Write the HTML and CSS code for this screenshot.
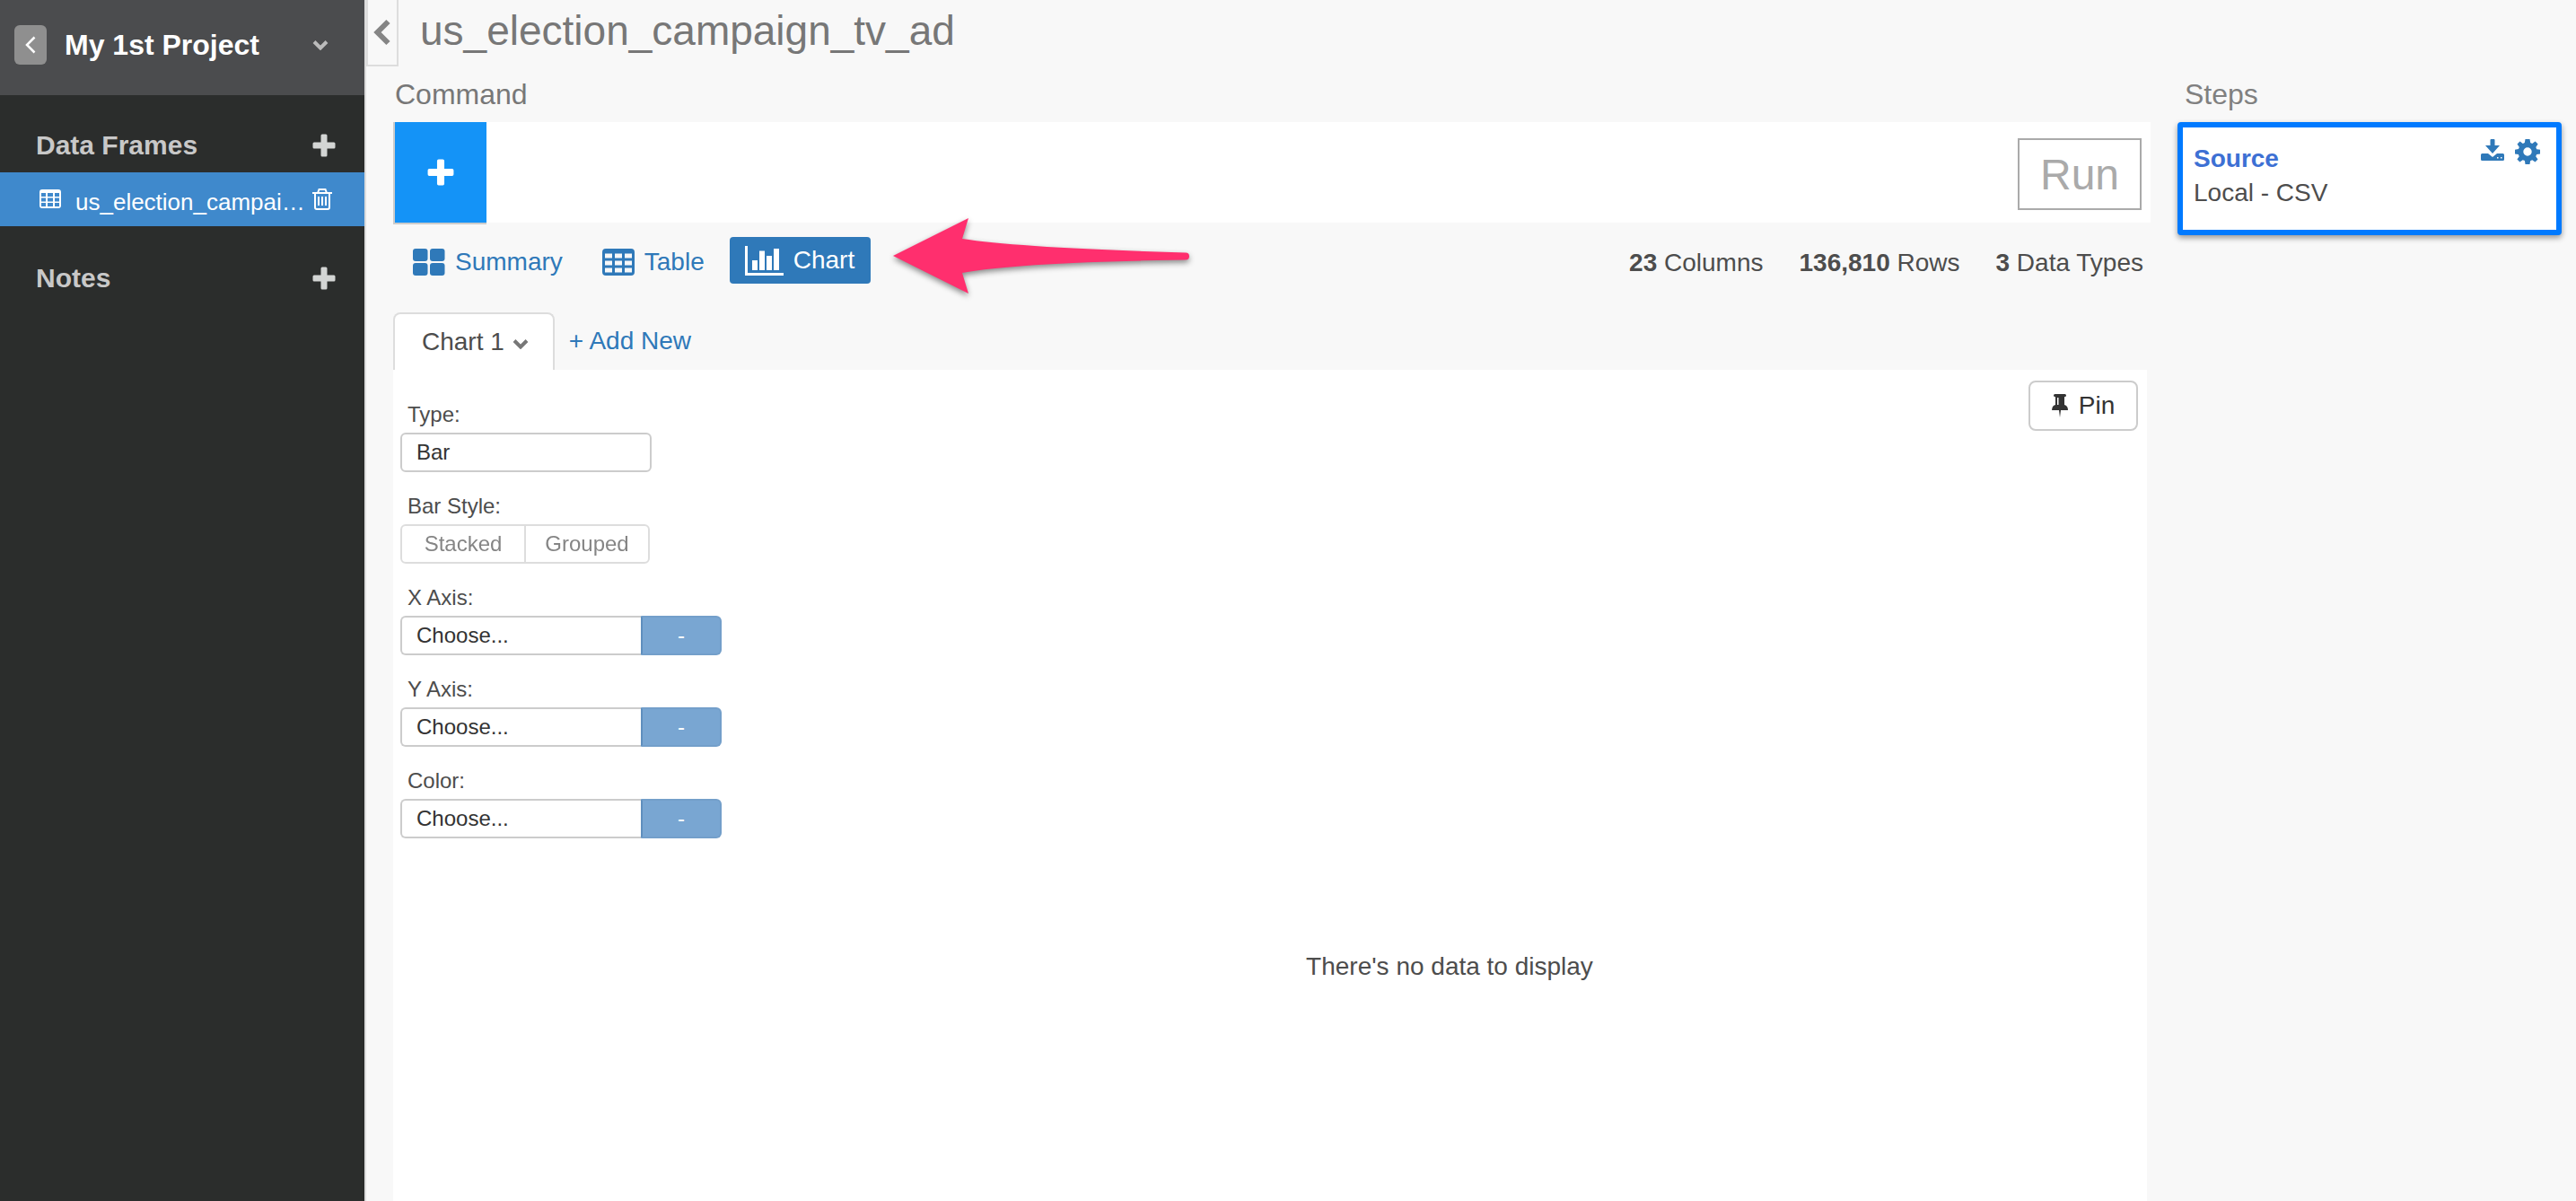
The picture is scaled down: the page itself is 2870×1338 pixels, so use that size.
FILE: index.html
```html
<!DOCTYPE html>
<html lang="en">
<head>
<meta charset="utf-8">
<title>My 1st Project</title>
<link rel="stylesheet" href="styles.css">
</head>
<body>
<svg class="defs" aria-hidden="true">
  <symbol id="plus" viewBox="0 0 26 26"><path d="M11 .5h4a1.5 1.5 0 0 1 1.500 1.500V9.500H24a1.500 1.500 0 0 1 1.500 1.500v4a1.500 1.500 0 0 1-1.500 1.500h-7.500V24a1.500 1.500 0 0 1-1.500 1.500h-4A1.500 1.500 0 0 1 9.500 24v-7.500H2A1.500 1.500 0 0 1 .5 15v-4A1.500 1.500 0 0 1 2 9.500h7.500V2A1.500 1.500 0 0 1 11 .5z"/></symbol>
  <symbol id="chevron" viewBox="0 0 18 12"><path d="M2 2.500l7 7 7-7" fill="none" stroke="currentColor" stroke-width="4"/></symbol>
  <symbol id="grid" viewBox="0 0 36 30"><path fill-rule="evenodd" d="M4 0h28a4 4 0 0 1 4 4v22a4 4 0 0 1-4 4H4a4 4 0 0 1-4-4V4a4 4 0 0 1 4-4zM3 5.500v5h8v-5zM14 5.500v5h8v-5zM25 5.500v5h8v-5zM3 13.500v5h8v-5zM14 13.500v5h8v-5zM25 13.500v5h8v-5zM3 21.500v5h8v-5zM14 21.500v5h8v-5zM25 21.500v5h8v-5z"/></symbol>
</svg>
<div class="app">
  <aside class="sidebar">
    <header class="project">
      <button class="back" aria-label="Back"><svg width="12" height="20" viewBox="0 0 12 20"><path d="M10.500 1.500L2 10l8.500 8.500" fill="none" stroke="currentColor" stroke-width="2.500"/></svg></button>
      <h1>My 1st Project</h1>
      <button class="plain project-menu" aria-label="Project menu"><svg width="18" height="12"><use href="#chevron"/></svg></button>
    </header>
    <section class="group">
      <div class="group-head"><h2>Data Frames</h2><button class="plain" aria-label="Add data frame"><svg width="26" height="26"><use href="#plus"/></svg></button></div>
      <div class="frame">
        <svg width="24" height="22" viewBox="0 0 24 22"><path fill-rule="evenodd" d="M3 0h18a3 3 0 0 1 3 3v15a3 3 0 0 1-3 3H3a3 3 0 0 1-3-3V3a3 3 0 0 1 3-3zM2 4v4h5V4zM9 4v4h6V4zM17 4v4h5V4zM2 9.500v4h5v-4zM9 9.500v4h6v-4zM17 9.500v4h5v-4zM2 15v4h5v-4zM9 15v4h6v-4zM17 15v4h5v-4z"/></svg>
        <a href="#">us_election_campai…</a>
        <button class="plain" aria-label="Delete data frame"><svg class="outline" width="22" height="24" viewBox="0 0 22 24"><path d="M0 5h22M6 5l1.500-4h7L16 5M3 5v16a2 2 0 0 0 2 2h12a2 2 0 0 0 2-2V5M7 9v10M11 9v10M15 9v10"/></svg></button>
      </div>
    </section>
    <section class="group">
      <div class="group-head"><h2>Notes</h2><button class="plain" aria-label="Add note"><svg width="26" height="26"><use href="#plus"/></svg></button></div>
    </section>
  </aside>
  <div class="page">
    <header class="titlebar">
      <button class="collapse" aria-label="Collapse sidebar"><svg width="20" height="30" viewBox="0 0 20 30"><path d="M16.500 3L4.500 15l12 12" fill="none" stroke="currentColor" stroke-width="6"/></svg></button>
      <h2>us_election_campaign_tv_ad</h2>
    </header>
    <div class="columns">
      <main class="main">
        <h3 class="label">Command</h3>
        <div class="command">
          <button class="add" aria-label="Add command"><svg width="30" height="30"><use href="#plus"/></svg></button>
          <input type="text" aria-label="Command">
          <button class="run" disabled>Run</button>
        </div>
        <div class="views">
          <nav>
            <a class="view" href="#"><svg width="36" height="30" viewBox="0 0 36 30"><rect width="16.500" height="14" rx="3"/><rect x="19" width="16.500" height="14" rx="3"/><rect y="16" width="16.500" height="14" rx="3"/><rect x="19" y="16" width="16.500" height="14" rx="3"/></svg>Summary</a>
            <a class="view" href="#"><svg width="36" height="30"><use href="#grid"/></svg>Table</a>
            <a class="view active" href="#"><svg width="43" height="33" viewBox="0 0 43 33"><path d="M0 0h3v30h40v3H0zM8 16h6v11H8zM16 5.500h6V27h-6zM24 11h6v16h-6zM32 3h6v24h-6z"/></svg>Chart</a>
            <svg class="arrow" width="336" height="96" viewBox="0 0 336 96"><path d="M3 45L87 3l-7 23q64 10 249 15.500a4 4 0 0 1 0 8Q144 52 80 64l7 23z"/></svg>
          </nav>
          <ul class="stats"><li><b>23</b> Columns</li><li><b>136,810</b> Rows</li><li><b>3</b> Data Types</li></ul>
        </div>
        <div class="tabs">
          <a class="tab" href="#">Chart 1 <svg width="18" height="12"><use href="#chevron"/></svg></a>
          <a class="new" href="#">+ Add New</a>
        </div>
        <section class="panel">
          <form class="controls">
            <div class="field"><label for="type">Type:</label><input class="box type" id="type" value="Bar"></div>
            <fieldset class="field"><legend>Bar Style:</legend><div class="pair"><button type="button" disabled>Stacked</button><button type="button" disabled>Grouped</button></div></fieldset>
            <div class="field"><label for="x">X Axis:</label><div class="choice"><input class="box" id="x" value="Choose..."><button type="button" aria-label="X Axis function" disabled>-</button></div></div>
            <div class="field"><label for="y">Y Axis:</label><div class="choice"><input class="box" id="y" value="Choose..."><button type="button" aria-label="Y Axis function" disabled>-</button></div></div>
            <div class="field"><label for="color">Color:</label><div class="choice"><input class="box" id="color" value="Choose..."><button type="button" aria-label="Color function" disabled>-</button></div></div>
          </form>
          <div class="chart">
            <button class="pin"><svg width="18" height="26" viewBox="0 0 18 26"><path fill-rule="evenodd" d="M3.500 0h11Q16 0 16 1.500T14.500 3H14v9q4 1 4 6h-8l-1 8-1-8H0q0-5 4-6V3h-.5Q2 3 2 1.500T3.500 0zM6 4v8h1.500V4z"/></svg>Pin</button>
            <p>There's no data to display</p>
          </div>
        </section>
      </main>
      <aside class="steps">
        <h3 class="label">Steps</h3>
        <article class="step">
          <div><h4>Source</h4><p>Local - CSV</p></div>
          <div class="tools">
            <button class="plain" aria-label="Download"><svg width="26" height="24" viewBox="0 0 26 24"><path fill-rule="evenodd" d="M11.500 0h3q1 0 1 1v6H21l-8 9-8-9h5.500V1q0-1 1-1zM1.500 16H8l5 4 5-4h6.500q1.500 0 1.500 1.500v5q0 1.500-1.500 1.500h-23Q0 24 0 22.500v-5Q0 16 1.500 16zM18 20v1.500h1.500V20zM22 20v1.500h1.500V20z"/></svg></button>
            <button class="plain" aria-label="Settings"><svg width="28" height="28" viewBox="0 0 28 28"><path fill-rule="evenodd" d="M11.500 0h5l.7 4 2 .9L22.600 2.500l3 3-2.300 3.400.9 2.300 3.800.6v4.600l-3.900.7-.9 2.200 2.300 3.300-3 3-3.300-2.300-2.100.9-.6 3.800h-5l-.6-3.900-2.200-.8-3.300 2.300-3-3 2.300-3.300-.9-2.200L0 16.400v-4.600l3.900-.7.9-2.200L2.500 5.500l3-3 3.300 2.400 2-.9zM14 9.300a4.700 4.700 0 1 0 0 9.400 4.700 4.700 0 0 0 0-9.400z"/></svg></button>
          </div>
        </article>
      </aside>
    </div>
  </div>
</div>
</body>
</html>
```
FILE: styles.css
```css
* { box-sizing: border-box; }
body { margin: 0; background: #f8f8f8; color: #4d4d4d; font: 28px/32px "Liberation Sans", Arial, sans-serif; }
h1, h2, h3, h4, p, ul { margin: 0; padding: 0; font-weight: normal; }
a { color: #2f79b9; text-decoration: none; }
button, input { font: inherit; margin: 0; padding: 0; }
svg { display: block; flex: none; fill: currentColor; }
.outline { fill: none; stroke: currentColor; stroke-width: 2; }
.defs { position: absolute; width: 0; height: 0; }
.plain { border: 0; background: none; color: inherit; }
.app { display: flex; min-height: 100vh; }

.sidebar { flex: none; width: 408px; background: #2b2d2c; border-right: 2px solid #ddd; color: #c8c8c8; }
.project { display: flex; align-items: center; height: 106px; padding: 0 40px 6px 16px; background: #4b4c4e; }
.project h1 { flex: 1; margin-left: 20px; color: #fff; font-size: 32px; line-height: 36px; font-weight: bold; }
.back { display: flex; align-items: center; justify-content: center; width: 36px; height: 44px; border: 0; border-radius: 6px; background: #8f8f8f; color: #fff; }
.project-menu { color: #bbb; }
.group { margin-bottom: 28px; }
.group-head { display: flex; align-items: center; justify-content: space-between; height: 60px; padding: 0 32px 0 40px; }
.group:first-of-type .group-head { height: 86px; padding-top: 26px; }
.group-head h2 { font-size: 30px; font-weight: bold; }
.group-head button { color: #d3d5d4; }
.frame { display: flex; align-items: center; height: 60px; padding: 0 36px 0 44px; background: #3f89cc; color: #fff; font-size: 26px; }
.frame a { flex: 1; margin: 6px 0 0 16px; color: #fff; white-space: nowrap; }

.page { flex: 1; min-width: 0; display: flex; flex-direction: column; }
.titlebar { display: flex; height: 74px; }
.titlebar h2 { margin-left: 24px; color: #777; font-size: 46px; line-height: 68px; }
.collapse { display: flex; align-items: center; justify-content: center; width: 36px; height: 74px; border: solid #ddd; border-width: 0 2px 2px; background: #f8f8f8; color: #858585; }
.columns { flex: 1; display: flex; gap: 30px; padding: 0 16px 0 30px; }
.main { flex: 1; min-width: 0; display: flex; flex-direction: column; }
.label { height: 62px; padding: 12px 2px 0; color: #777; font-size: 32px; line-height: 38px; }
.command { display: flex; align-items: center; height: 112px; padding-right: 10px; background: #fff; }
.add { display: flex; align-items: center; justify-content: center; align-self: flex-start; flex: none; width: 104px; height: 114px; border: solid #ccc; border-width: 0 0 2px 2px; background: #1493f7; color: #fff; }
.command input { flex: 1; min-width: 0; height: 80px; padding: 0 16px; border: 0; outline: 0; }
.run { width: 138px; height: 80px; margin-top: 4px; padding-top: 2px; border: 2px solid #aaa; background: #fff; color: #aaa; font-size: 48px; }
.views { display: flex; justify-content: space-between; align-items: flex-start; padding-top: 16px; }
.views nav { display: flex; align-items: flex-start; position: relative; padding-left: 6px; }
.view { display: flex; align-items: center; gap: 11px; height: 52px; padding: 4px 10px 0 16px; }
.view + .view { margin-left: 18px; }
.view.active { padding: 0 18px 0 17px; border-radius: 4px; background: #2f79b9; color: #fff; }
.arrow { position: absolute; left: 554px; top: -24px; fill: #ff2f6e; filter: drop-shadow(0 3px 3px rgba(0, 0, 0, .45)); }
.stats { display: flex; gap: 40px; padding: 13px 8px 0 0; list-style: none; }
.tabs { display: flex; height: 64px; margin-top: 32px; line-height: 64px; }
.tab { display: flex; align-items: center; gap: 9px; padding: 0 27px 0 30px; border: 2px solid #ddd; border-bottom: 0; border-radius: 8px 8px 0 0; background: #fff; color: #4d4d4d; }
.tab svg { color: #777; margin-top: 4px; }
.new { padding-left: 16px; }
.panel { flex: 1; display: flex; margin-right: 4px; background: #fff; }
.controls { flex: none; width: 400px; padding: 36px 34px 0 8px; font-size: 24px; }
.field { display: block; height: 102px; min-width: 0; margin: 0; padding: 0; border: 0; }
.field label, .field legend { display: block; height: 34px; padding: 0 8px; line-height: 28px; }
.box { display: block; width: 100%; min-width: 0; height: 44px; padding: 0 16px; border: 2px solid #ccc; border-radius: 6px; background: #fff; color: #333; }
.type { width: 280px; }
.pair { display: flex; width: 278px; opacity: .65; }
.pair button { flex: 1; height: 44px; border: 2px solid #ccc; background: #fff; color: #444; }
.pair button:first-child { border-radius: 6px 0 0 6px; }
.pair button + button { margin-left: -2px; border-radius: 0 6px 6px 0; }
.choice { display: flex; }
.choice .box { flex: 1; border-right: 0; border-radius: 6px 0 0 6px; }
.choice button { width: 90px; height: 44px; border: 2px solid #739fca; border-left-color: #5f8fbe; border-radius: 0 6px 6px 0; background: #79a6d2; color: #fff; }
.chart { flex: 1; display: flex; flex-direction: column; padding: 12px 0; }
.pin { display: flex; align-items: center; justify-content: center; gap: 12px; align-self: flex-end; width: 122px; height: 56px; margin-right: 10px; border: 2px solid #ccc; border-radius: 8px; background: #fff; color: #333; }
.chart p { margin-top: 581px; text-align: center; }

.steps { flex: none; width: 428px; }
.steps .label { padding-left: 8px; color: #808080; }
.step { display: flex; justify-content: space-between; height: 126px; padding: 13px 18px 0 12px; border: 6px solid #007aff; border-radius: 4px; background: #fff; box-shadow: 0 3px 6px rgba(0, 0, 0, .4); }
.step h4 { margin-top: 4px; color: #3d70d4; font-weight: bold; line-height: 36px; }
.step p { line-height: 40px; }
.tools { display: flex; align-items: flex-start; gap: 12px; color: #2f79b9; }
```
